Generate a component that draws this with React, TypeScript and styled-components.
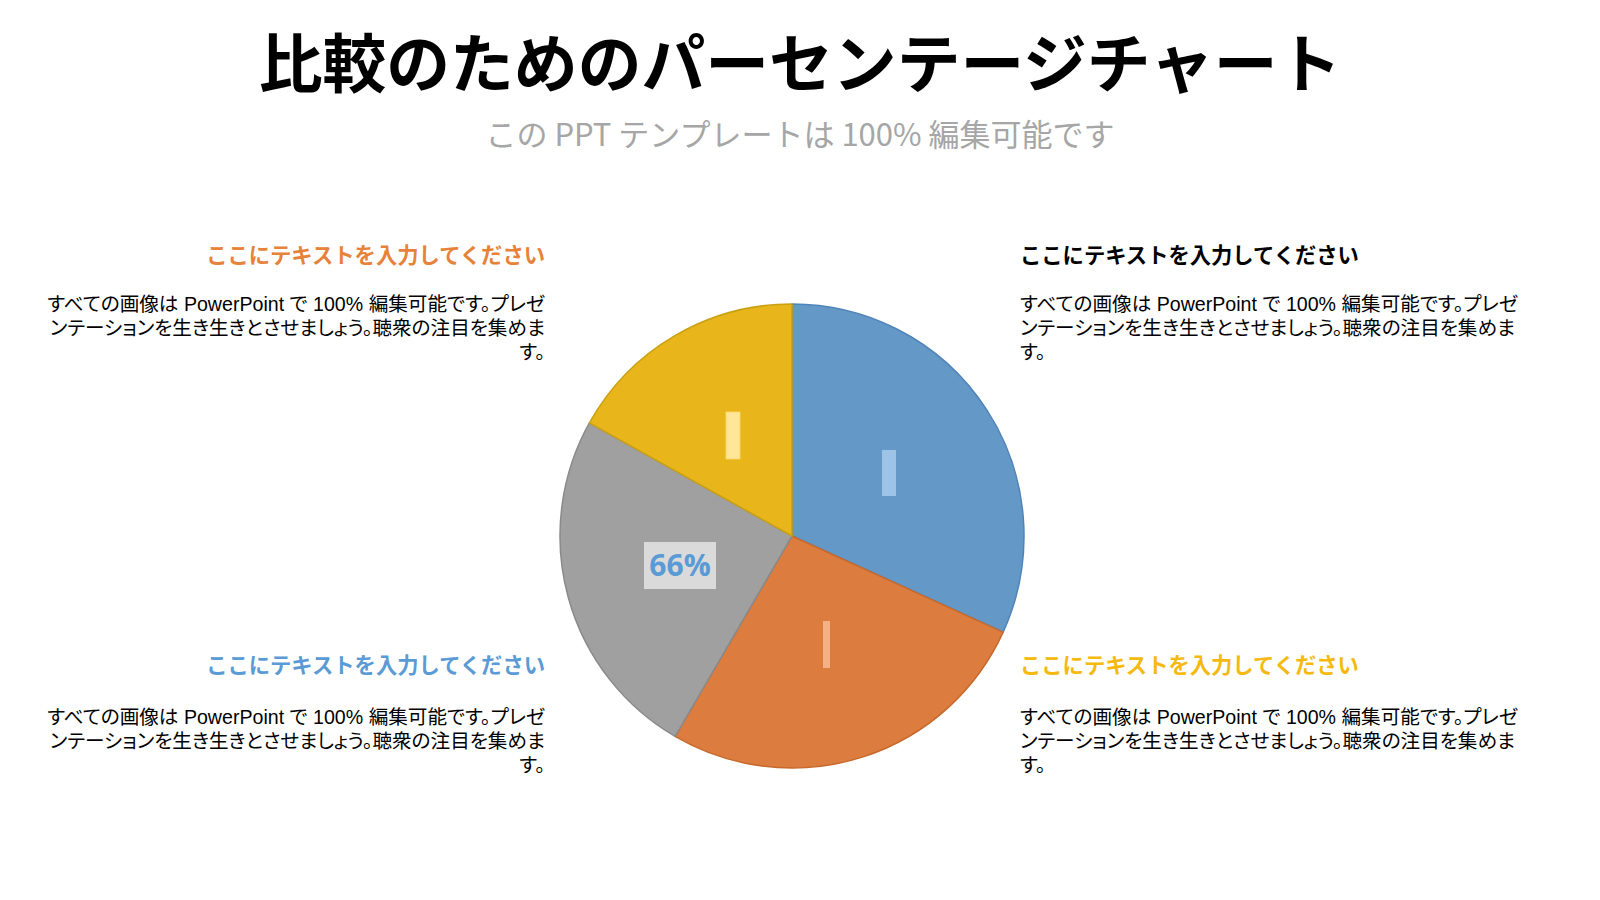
import React from 'react';
import styled, { createGlobalStyle } from 'styled-components';

const GlobalStyle = createGlobalStyle`
  html, body {
    margin: 0;
    padding: 0;
    background: #ffffff;
  }
  body {
    font-family: "Liberation Sans", "Noto Sans CJK JP", sans-serif;
  }
`;

const Page = styled.div`
  width: 1600px;
  height: 900px;
  overflow: hidden;
  background: #ffffff;
`;

const Header = styled.header`
  display: flex;
  flex-direction: column;
  align-items: center;
  padding-top: 21px;
`;

const Title = styled.h1`
  margin: 0;
  font-family: "Noto Sans CJK JP", sans-serif;
  font-weight: 700;
  font-size: 63.8px;
  line-height: 77px;
  color: #000000;
`;

const Subtitle = styled.p`
  margin: 16px 0 0;
  font-family: "Noto Sans CJK JP", sans-serif;
  font-weight: 400;
  font-size: 31px;
  line-height: 37px;
  color: #a6a6a6;
`;

const Main = styled.main`
  display: grid;
  grid-template-columns: 500px 475px 500px;
  justify-content: start;
  align-items: start;
  padding-left: 45px;
  margin-top: 88px;
`;

const Column = styled.div<{ $align: 'left' | 'right' }>`
  display: flex;
  flex-direction: column;
  gap: 285px;
  text-align: ${(p) => p.$align};
`;

const Block = styled.section<{ $gap: number }>`
  display: flex;
  flex-direction: column;
  gap: ${(p) => p.$gap}px;
`;

const Heading = styled.h3<{ $color: string }>`
  margin: 0;
  font-family: "Noto Sans CJK JP", sans-serif;
  font-weight: 700;
  font-size: 21.3px;
  line-height: 30px;
  white-space: nowrap;
  color: ${(p) => p.$color};
`;

const Body = styled.p`
  margin: 0;
  font-family: "Liberation Sans", "Noto Sans CJK JP", sans-serif;
  font-feature-settings: "palt";
  font-size: 19.6px;
  line-height: 24px;
  white-space: nowrap;
  color: #000000;
`;

const ChartWrap = styled.div`
  margin: 64px 0 0 14px;
  width: 466px;
  height: 466px;
`;

type Slice = { value: number; fill: string; stroke: string };

const slices: Slice[] = [
  { value: 31.8, fill: '#6398c7', stroke: '#4f84b9' },
  { value: 26.6, fill: '#dc7d3f', stroke: '#c7692c' },
  { value: 24.7, fill: '#a0a0a0', stroke: '#8a8a8a' },
  { value: 16.9, fill: '#e8b51b', stroke: '#c9a010' },
];

const CX = 233;
const CY = 233;
const R = 232;

const point = (deg: number) => {
  const rad = (deg * Math.PI) / 180;
  return [CX + R * Math.sin(rad), CY - R * Math.cos(rad)];
};

const PieChart = () => {
  const total = slices.reduce((s, x) => s + x.value, 0);
  let start = 0;
  const paths = slices.map((s, i) => {
    const sweep = (s.value / total) * 360;
    const [x1, y1] = point(start);
    const [x2, y2] = point(start + sweep);
    const large = sweep > 180 ? 1 : 0;
    start += sweep;
    return (
      <path
        key={i}
        d={`M${CX},${CY} L${x1},${y1} A${R},${R} 0 ${large} 1 ${x2},${y2} Z`}
        fill={s.fill}
        stroke={s.stroke}
        strokeWidth={1.5}
        strokeLinejoin="round"
      />
    );
  });

  return (
    <svg width="466" height="466" viewBox="0 0 466 466">
      {paths}
      {/* data labels */}
      <rect x="323" y="147" width="14" height="46" fill="#9dc3e6" />
      <rect x="264" y="318" width="7" height="47" fill="#f4b183" />
      <rect x="167" y="109" width="14" height="47" fill="#ffe699" stroke="#ffd966" strokeWidth="0.8" />
      <rect x="85" y="239" width="72" height="47" fill="#dadada" />
      <text
        x="121"
        y="273"
        textAnchor="middle"
        fontFamily="'Open Sans', sans-serif"
        fontWeight="700"
        fontSize="30"
        fill="#5b9bd5"
      >
        66%
      </text>
    </svg>
  );
};

const BodyText = () => (
  <Body>
    すべての画像は PowerPoint で 100% 編集可能です。プレゼ
    <br />
    ンテーションを生き生きとさせましょう。聴衆の注目を集めま
    <br />
    す。
  </Body>
);

const HEADING = 'ここにテキストを入力してください';

const App = () => {
  return (
    <Page>
      <GlobalStyle />
      <Header>
        <Title>比較のためのパーセンテージチャート</Title>
        <Subtitle>この PPT テンプレートは 100% 編集可能です</Subtitle>
      </Header>
      <Main>
        <Column $align="right">
          <Block $gap={23}>
            <Heading $color="#e7823a">{HEADING}</Heading>
            <BodyText />
          </Block>
          <Block $gap={26}>
            <Heading $color="#5b9bd5">{HEADING}</Heading>
            <BodyText />
          </Block>
        </Column>
        <ChartWrap>
          <PieChart />
        </ChartWrap>
        <Column $align="left">
          <Block $gap={23}>
            <Heading $color="#000000">{HEADING}</Heading>
            <BodyText />
          </Block>
          <Block $gap={26}>
            <Heading $color="#f5b90f">{HEADING}</Heading>
            <BodyText />
          </Block>
        </Column>
      </Main>
    </Page>
  );
};

export default App;
